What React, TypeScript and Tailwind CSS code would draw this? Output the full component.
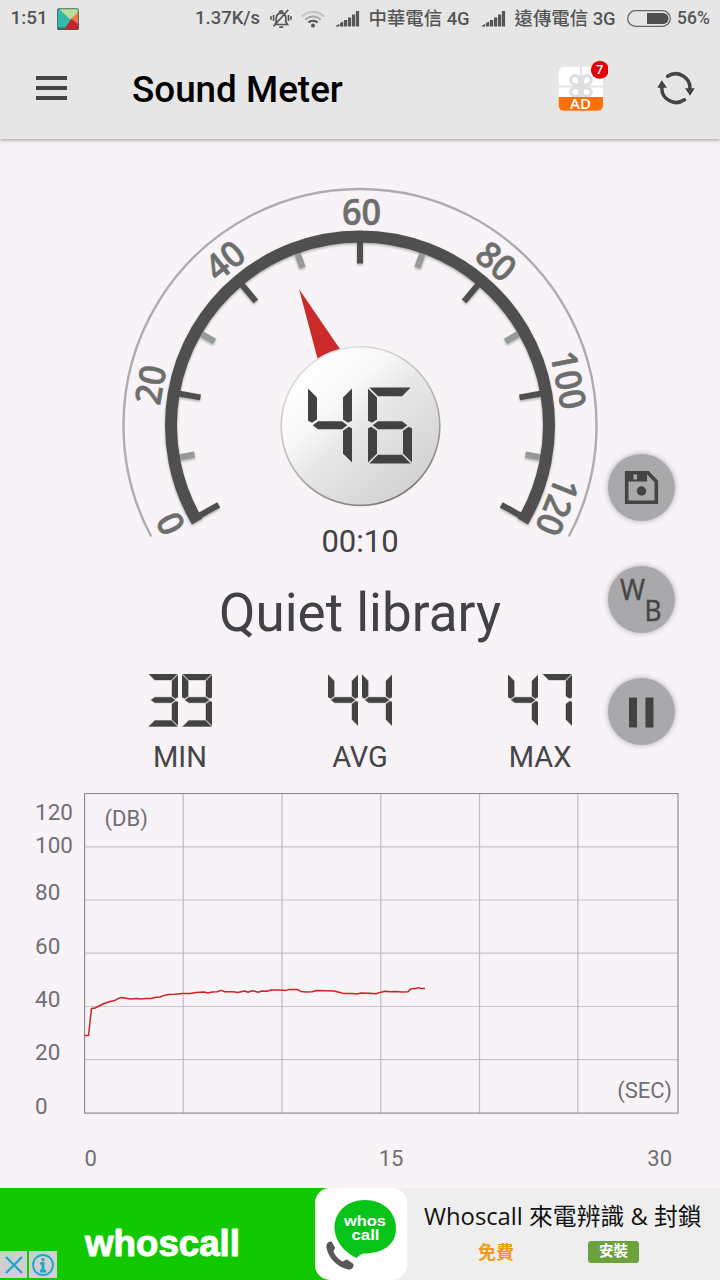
import React from "react";

const SEGMENTS: Record<string, string> = {
  a: "4,0 128,0 102,26 30,26",
  b: "132,3 105,30 105,96 120,106 132,100",
  c: "132,122 122,118 105,130 105,198 132,225",
  d: "30,202 102,202 128,228 4,228",
  e: "0,122 10,118 27,130 27,198 0,225",
  f: "0,3 27,30 27,96 12,106 0,100",
  g: "14,113 30,101 102,101 118,113 102,125 30,125",
};

const DIGITS: Record<string, string> = {
  "0": "abcdef",
  "1": "bc",
  "2": "abdeg",
  "3": "abcdg",
  "4": "bcfg",
  "5": "acdfg",
  "6": "acdefg",
  "7": "abc",
  "8": "abcdefg",
  "9": "abcdfg",
};

function Digit({ value, className }: { value: string; className: string }) {
  return (
    <svg viewBox="0 0 132 228" preserveAspectRatio="none" className={className}>
      {DIGITS[value].split("").map((s) => (
        <polygon key={s} points={SEGMENTS[s]} fill="#424242" stroke="#424242" strokeOpacity="0.35" strokeWidth="5" />
      ))}
    </svg>
  );
}

const CX = 360;
const CY = 425.5;

function polar(r: number, deg: number): [number, number] {
  const a = (deg * Math.PI) / 180;
  return [CX + r * Math.cos(a), CY - r * Math.sin(a)];
}

function arc(r: number, from: number, to: number) {
  const [x1, y1] = polar(r, from);
  const [x2, y2] = polar(r, to);
  return `M${x1} ${y1}A${r} ${r} 0 1 1 ${x2} ${y2}`;
}

const LABELS = [
  { t: "0", a: 207.4, rot: -117 },
  { t: "20", a: 169, rot: -80 },
  { t: "40", a: 129.3, rot: -39 },
  { t: "60", a: 89.6, rot: 0 },
  { t: "80", a: 50.3, rot: 40 },
  { t: "100", a: 12.3, rot: 79 },
  { t: "120", a: -22.3, rot: 112 },
];

function Gauge() {
  return (
    <svg viewBox="0 139 720 386" className="block h-[386px] w-[720px] overflow-visible">
      <defs>
        <linearGradient id="knob" x1="0.12" y1="0.15" x2="0.8" y2="0.9">
          <stop offset="0" stopColor="#ffffff" />
          <stop offset="0.3" stopColor="#f9f8f9" />
          <stop offset="0.5" stopColor="#e9e8e9" />
          <stop offset="0.8" stopColor="#dcdbdc" />
          <stop offset="1" stopColor="#d4d3d4" />
        </linearGradient>
        <linearGradient id="rim" x1="0.2" y1="0" x2="0.7" y2="1">
          <stop offset="0" stopColor="#e4e2e4" />
          <stop offset="0.5" stopColor="#bbbbbb" />
          <stop offset="1" stopColor="#777777" />
        </linearGradient>
        <filter id="soft" x="-10%" y="-10%" width="120%" height="120%">
          <feDropShadow dx="0" dy="1.5" stdDeviation="1" floodColor="#000" floodOpacity="0.3" />
        </filter>
      </defs>
      <path d={arc(236.5, 208, -28)} fill="none" stroke="#aeacaf" strokeWidth="2.4" />
      <g filter="url(#soft)">
        {[190, 150, 110, 70, 30, -10].map((a) => {
          const [x1, y1] = polar(185, a);
          const [x2, y2] = polar(168, a);
          return <line key={a} x1={x1} y1={y1} x2={x2} y2={y2} stroke="#989a98" strokeWidth="6.5" />;
        })}
        {[209.3, 170, 130, 90, 50, 10, -29.3].map((a) => {
          const [x1, y1] = polar(186, a);
          const [x2, y2] = polar(162, a);
          return <line key={a} x1={x1} y1={y1} x2={x2} y2={y2} stroke="#4f4f4f" strokeWidth="6" />;
        })}
        <path d={arc(189, 210.5, -30.5)} fill="none" stroke="#4f4f4f" strokeWidth="12" />
      </g>
      {LABELS.map(({ t, a, rot }) => {
        const [x, y] = polar(213.5, a);
        return (
          <text
            key={t}
            transform={`translate(${x} ${y}) rotate(${rot})`}
            y="13"
            textAnchor="middle"
            textLength={t.length * 19.6}
            lengthAdjust="spacingAndGlyphs"
            fill="#6c6e6c"
            stroke="#6c6e6c"
            strokeWidth="0.5"
            className="font-['Open_Sans',sans-serif] text-[36px] font-semibold"
          >
            {t}
          </text>
        );
      })}
      <polygon points="299,289 319,364 342,352" fill="#cb2a2a" />
      <circle cx="360.5" cy="427" r="79.6" fill="#000" opacity="0.12" />
      <circle cx="360.5" cy="426" r="79.3" fill="url(#knob)" stroke="url(#rim)" strokeWidth="1.6" />
      <g transform="translate(308 387.5) scale(0.3333)" fill="#424242">
        {DIGITS["4"].split("").map((s) => (
          <polygon key={s} points={SEGMENTS[s]} />
        ))}
      </g>
      <g transform="translate(368 387.5) scale(0.3333)" fill="#424242">
        {DIGITS["6"].split("").map((s) => (
          <polygon key={s} points={SEGMENTS[s]} />
        ))}
      </g>
    </svg>
  );
}

function Stat({ value, label }: { value: string; label: string }) {
  return (
    <div className="flex w-[180px] flex-col items-center">
      <div className="flex gap-[3.4px]">
        {value.split("").map((d, i) => (
          <Digit key={i} value={d} className="block h-[52.5px] w-[30.2px]" />
        ))}
      </div>
      <div className="mt-[14px] text-[29px] leading-[32px] text-[#454547]">{label}</div>
    </div>
  );
}

function Fab({ children }: { children: React.ReactNode }) {
  return (
    <button className="block h-[67px] w-[67px] rounded-full bg-[#a9a8aa] shadow-[0_0_5px_1px_rgba(0,0,0,0.22)]">
      <svg viewBox="0 0 67 67" className="block h-[67px] w-[67px]">
        {children}
      </svg>
    </button>
  );
}

const TRACE =
  "84.5,1035.5 88.5,1035.5 91.5,1008.5 95,1008 99,1006 104,1003.5 110,1001.5 114,1000.8 118,998.6 122,997.6 126,998.2 130,999 137,998.6 141,999 146,998.6 151,998.4 155,997.4 160,997 164,995.4 169,994.6 175,994.2 182,993.4 190,993.6 196,992.4 204,992 208,993 212,992 217,991.8 221,990.4 225,991.7 233,991.8 238,992.6 242,991.6 245,991 248,992.2 252,990.8 255,991.3 258,992.3 262,991 267,991.2 271,990 277,990 283,990.2 286,990.4 289,989.4 297,989.5 301,991.4 306,992 312,991.8 317,990.6 326,990.8 334,991 339,992.2 344,993.6 352,993.4 357,994 361,993 369,993.2 376,993.8 380,992.4 385,991.3 390,991.7 395,991.4 402,992 408,991.8 411,988.8 416,988.6 418,987.6 421,988.5 425,988.6";

function Chart() {
  return (
    <svg viewBox="84 793 595 321" className="block h-[321px] w-[595px]">
      {[846.8, 900, 953.2, 1006.5, 1059.7].map((y) => (
        <line key={y} x1="85" x2="678" y1={y} y2={y} stroke="#c9c6ca" strokeWidth="1.2" />
      ))}
      {[183.2, 282, 380.8, 479.5, 577.8].map((x) => (
        <line key={x} y1="794" y2="1113" x1={x} x2={x} stroke="#bfbcc1" strokeWidth="1.2" />
      ))}
      <rect x="84.6" y="793.5" width="593.4" height="319.6" fill="none" stroke="#89868b" strokeWidth="1.1" />
      <polyline points={TRACE} fill="none" stroke="#d22020" strokeWidth="1.5" strokeLinejoin="round" />
      <text x="104.5" y="825.5" className="text-[22px]" fill="#706e72">
        (DB)
      </text>
      <text x="672" y="1097.5" textAnchor="end" className="text-[22px]" fill="#706e72">
        (SEC)
      </text>
    </svg>
  );
}

function Signal({ className }: { className: string }) {
  return (
    <svg viewBox="0 0 24 16" className={className} fill="#555">
      <path d="M0 15.500V14.500L3.300 13V15.500ZM4 15.500V12L7.300 10.500V15.500ZM8 9h3.200v6.500H8ZM12 6.500h3.200v9H12ZM16 3.500h3.200v12H16ZM19.900 0h3.200v15.500H19.900Z" />
    </svg>
  );
}

function StatusBar() {
  return (
    <div className="flex h-[37px] items-center whitespace-nowrap text-[18px] font-medium text-[#555]">
      <span className="w-[57px] pl-[10.5px] text-[19px]">1:51</span>
      <svg viewBox="0 0 22 22" className="h-[22px] w-[22px]">
        <clipPath id="play">
          <rect width="22" height="22" rx="2.5" />
        </clipPath>
        <g clipPath="url(#play)">
          <rect width="22" height="22" fill="#34b9ac" />
          <path d="M1 0L14 12L22 4V0Z" fill="#b8df9e" />
          <path d="M14 11L22 3V16Z" fill="#ef7b43" />
          <path d="M8 20L14.500 10.500L22 17V22H8Z" fill="#c9232b" />
          <path d="M0 22V19.500L8.500 19.500L8 22Z" fill="#24786f" />
        </g>
        <rect x="0.6" y="0.6" width="20.8" height="20.8" rx="2.2" fill="none" stroke="#4a5a52" strokeOpacity="0.65" strokeWidth="1.2" />
      </svg>
      <span className="ml-[116px] w-[75px] text-[18.5px]">1.37K/s</span>
      <svg viewBox="0 0 22 20" className="h-[20px] w-[22px]" fill="none" stroke="#555" strokeWidth="1.7">
        <path d="M5 15.5H17.5L15.8 13V8.5A4.8 5 0 0 0 6.3 8.5V13L5 15.5M9.5 3.5a1.6 1.6 0 0 1 3.2 0M9.3 18.2h3.8M3.4 17.5L18.3 0.8" />
        <path d="M3.6 6v6M1 7.3v3.5M18.5 6v6M21 7.3v3.5" />
      </svg>
      <svg viewBox="0 0 24 18" className="ml-[9px] h-[18px] w-[24px]" fill="none" strokeWidth="2.1">
        <path d="M1 6.5A15.5 15.5 0 0 1 23 6.5" stroke="#c4c4c4" />
        <path d="M4.2 9.8A11 11 0 0 1 19.8 9.8" stroke="#aaa" />
        <path d="M7.4 12.6A6.5 6.5 0 0 1 16.6 12.6" stroke="#555" />
        <circle cx="12" cy="15.5" r="2" fill="#555" />
      </svg>
      <Signal className="ml-[11px] mt-px h-[16px] w-[24px]" />
      <span className="ml-[8.5px] w-[113.5px] text-[18.4px] font-['Roboto','Noto_Sans_CJK_TC',sans-serif]">中華電信 4G</span>
      <Signal className="mt-px h-[16px] w-[24px]" />
      <span className="ml-[8.5px] w-[112.5px] text-[18.4px] font-['Roboto','Noto_Sans_CJK_TC',sans-serif]">遠傳電信 3G</span>
      <svg viewBox="0 0 44 17" className="h-[17px] w-[44px]">
        <rect x="0.7" y="0.7" width="42.6" height="15.6" rx="7.8" fill="none" stroke="#666" strokeWidth="1.3" />
        <path d="M20 3H36A5.5 5.5 0 0 1 36 14H20Z" fill="#505050" />
      </svg>
      <span className="ml-[6px] text-[17.5px]">56%</span>
    </div>
  );
}

function Toolbar() {
  return (
    <div className="flex h-[102px] items-center">
      <div className="ml-[36px] flex w-[31px] flex-col gap-[6px]">
        <div className="h-[4px] bg-[#444]" />
        <div className="h-[4px] bg-[#444]" />
        <div className="h-[4px] bg-[#444]" />
      </div>
      <h1 className="ml-[65px] mt-[4px] w-[420px] text-[36.8px] font-medium leading-[44px] text-black">Sound Meter</h1>
      <svg viewBox="0 0 56 56" className="mb-[7px] h-[56px] w-[56px]">
        <clipPath id="gift">
          <rect x="6.7" y="9.7" width="44.3" height="44" rx="5" />
        </clipPath>
        <g clipPath="url(#gift)">
          <rect width="56" height="56" fill="#fff" />
          <path d="M29 9V40M6 29.5H52" stroke="#e3e3e3" strokeWidth="2.2" />
          <g fill="none" stroke="#dedede" strokeWidth="3">
            <path d="M27.5 28C20 28 18 25 19 21.5C21 17 27.5 18 27.5 23Z" />
            <path d="M30.5 28C38 28 40 25 39 21.5C37 17 30.5 18 30.5 23Z" />
            <path d="M27.5 31C20 30 18 34 19 36.5C21 41 27.5 40 27.5 36Z" />
            <path d="M30.5 31C38 30 40 34 39 36.5C37 41 30.5 40 30.5 36Z" />
          </g>
          <rect y="40" width="56" height="16" fill="#ff6f07" />
        </g>
        <text x="28.500" y="52" textAnchor="middle" textLength="21" lengthAdjust="spacingAndGlyphs" fill="#fff" className="font-['Open_Sans',sans-serif] text-[13.5px] font-semibold">
          AD
        </text>
        <circle cx="47.8" cy="12.8" r="9" fill="#e00008" />
        <text x="47.8" y="17.4" textAnchor="middle" fill="#fff" className="text-[13px] font-medium">
          7
        </text>
      </svg>
      <svg viewBox="0 0 40 36" className="ml-[48px] h-[36px] w-[40px]">
        <g fill="none" stroke="#444" strokeWidth="3.5" strokeLinecap="round">
          <path d="M11.6 6.3A14.3 14.3 0 0 1 33.9 19" />
          <path d="M28.4 29.8A14.3 14.3 0 0 1 5.9 17" />
        </g>
        <path d="M29 18.3H38.8L34 25.8ZM1.2 17.8H11L5.8 10.3Z" fill="#444" />
      </svg>
    </div>
  );
}

const Y_LABELS = ["120", "100", "80", "60", "40", "20", "0"];
const Y_GAPS = [
  "mt-[7px]",
  "mt-[9px]",
  "mt-[23.4px]",
  "mt-[29.3px]",
  "mt-[29.3px]",
  "mt-[29.3px]",
  "mt-[29.3px]",
];

function AdBanner() {
  return (
    <div className="flex h-[92px] bg-[#eeeeee]">
      <div className="relative w-[315px] bg-[#12c800]">
        <svg viewBox="0 0 315 92" className="block h-[92px] w-[315px]">
          <text
            x="85"
            y="68"
            textLength="155"
            lengthAdjust="spacingAndGlyphs"
            fill="#fff"
            stroke="#fff"
            strokeWidth="1"
            strokeLinejoin="round"
            className="font-['Liberation_Sans',sans-serif] text-[37px] font-bold"
          >
            whoscall
          </text>
        </svg>
        <div className="absolute bottom-[2px] left-0 flex gap-[2px]">
          <svg viewBox="0 0 27 27" className="h-[27px] w-[27px] bg-[#cfcfcf]">
            <path d="M6 6L22 22M22 6L6 22" stroke="#1fa5c9" strokeWidth="2.2" />
          </svg>
          <svg viewBox="0 0 28 27" className="h-[27px] w-[28px] bg-[#cfcfcf]">
            <circle cx="14" cy="14" r="10" fill="none" stroke="#1fa5c9" strokeWidth="1.8" />
            <path d="M14 7.2V10M11.2 12.4H14V20M11 20H17" stroke="#1fa5c9" strokeWidth="2.8" fill="none" />
          </svg>
        </div>
      </div>
      <div className="w-[92px] bg-[linear-gradient(90deg,#12c800_50%,#eeeeee_50%)]">
        <div className="h-[92px] rounded-[15px] bg-white">
          <svg viewBox="0 0 92 92" className="block h-[92px] w-[92px]">
            <path
              d="M50 12C68 12 81 24 81 40C81 57 68 65.500 48 65.500C46 66 43.500 68 41.500 70C35 67 19.500 57 19.500 39C20 23 33 12 50 12Z"
              fill="#08c318"
            />
            <g fill="#fff" className="font-['Liberation_Sans',sans-serif] text-[15px] font-bold">
              <text x="29" y="37.500" textLength="42" lengthAdjust="spacingAndGlyphs">
                whos
              </text>
              <text x="36.500" y="52" textLength="28" lengthAdjust="spacingAndGlyphs">
                call
              </text>
            </g>
            <path
              d="M16.500 53.500C12.500 53 11 56.500 11.500 60C13.500 70 22 79 33 81.500C36.500 82 39 79.500 38.500 76L32 71.500C30 71.500 29 73.500 27.500 73.500C23.500 71.500 19.500 66.500 18.500 63.500C18.500 62 20.500 61 20 59.500Z"
              fill="#58585a"
            />
          </svg>
        </div>
      </div>
      <div className="w-[313px] whitespace-nowrap font-['Open_Sans','Noto_Sans_CJK_TC',sans-serif]">
        <div className="ml-[17px] mt-[12px] text-[23.8px] leading-[32px] text-[#111]">Whoscall 來電辨識 &amp; 封鎖</div>
        <div className="mt-[9px] flex">
          <span className="ml-[71px] w-[110px] text-[18px] font-bold leading-[22px] text-[#f39a17]">免費</span>
          <span className="h-[22px] w-[51px] rounded-[3px] bg-[#6ba23b] text-center text-[14.5px] font-bold leading-[19px] text-white">
            安裝
          </span>
        </div>
      </div>
    </div>
  );
}

export default function App() {
  return (
    <div className="flex h-[1280px] w-[720px] flex-col overflow-hidden bg-[#f7f3f7] font-['Roboto',sans-serif]">
      <header className="z-10 h-[139px] shrink-0 bg-[#e6e6e6] shadow-[0_1px_4px_rgba(0,0,0,0.38)]">
        <StatusBar />
        <Toolbar />
      </header>
      <main className="relative h-[1049px] shrink-0">
        <Gauge />
        <div className="h-[32px] text-center text-[31px] leading-[33px] text-[#424244]">00:10</div>
        <div className="h-[117px] pt-[24px] text-center text-[53px] leading-[64px] text-[#424244]">Quiet library</div>
        <div className="flex h-[119px] pl-[90px]">
          <Stat value="39" label="MIN" />
          <Stat value="44" label="AVG" />
          <Stat value="47" label="MAX" />
        </div>
        <div className="flex h-[321px]">
          <div className="flex w-[84px] flex-col pl-[35px] text-[22.5px] leading-[24px] text-[#706e72]">
            {Y_LABELS.map((l, i) => (
              <span key={l} className={Y_GAPS[i]}>
                {l}
              </span>
            ))}
          </div>
          <Chart />
        </div>
        <div className="flex w-[672px] justify-between pl-[84.5px] pt-[32px] text-[22px] leading-[26px] text-[#706e72]">
          <span>0</span>
          <span className="pl-[38px]">15</span>
          <span>30</span>
        </div>
        <div className="absolute left-[608px] top-[315px] flex flex-col gap-[45px]">
          <Fab>
            <path d="M18.700 18.700H40L48.300 27.500V48.300H18.700Z" fill="none" stroke="#444" strokeWidth="3.600" />
            <path d="M18 17H39V27.500H18Z" fill="#444" />
            <rect x="25.500" y="20.500" width="3.500" height="5" fill="#a9a8aa" />
            <circle cx="33.500" cy="37" r="4.700" fill="#444" />
          </Fab>
          <Fab>
            <g fill="#464646" stroke="#464646" strokeWidth="0.5" className="font-['Open_Sans',sans-serif] text-[29px]">
              <text x="12" y="34" textLength="25" lengthAdjust="spacingAndGlyphs">
                W
              </text>
              <text x="36.500" y="54.500" textLength="17" lengthAdjust="spacingAndGlyphs">
                B
              </text>
            </g>
          </Fab>
          <Fab>
            <path d="M21 19.500H29V49.500H21ZM37.500 19.500H45.500V49.500H37.500Z" fill="#424242" />
          </Fab>
        </div>
      </main>
      <AdBanner />
    </div>
  );
}
